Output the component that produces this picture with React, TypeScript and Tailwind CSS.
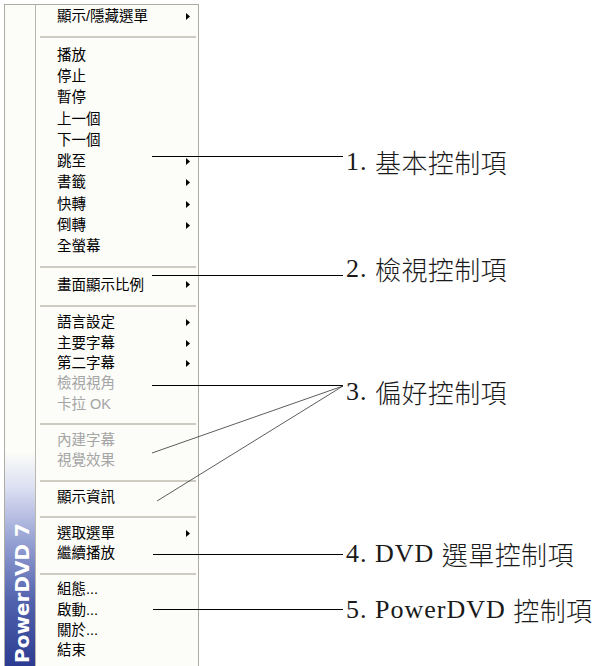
type Item = { t: string; arrow?: boolean; off?: boolean; tall?: boolean } | "sep" | "sep-sm";

const menu: Item[] = [
  { t: "顯示/隱藏選單", arrow: true, tall: true },
  "sep",
  { t: "播放", tall: true },
  { t: "停止", tall: true },
  { t: "暫停", tall: true },
  { t: "上一個", tall: true },
  { t: "下一個", tall: true },
  { t: "跳至", arrow: true, tall: true },
  { t: "書籤", arrow: true, tall: true },
  { t: "快轉", arrow: true, tall: true },
  { t: "倒轉", arrow: true, tall: true },
  { t: "全螢幕", tall: true },
  "sep",
  { t: "畫面顯示比例", arrow: true, tall: true },
  "sep",
  { t: "語言設定", arrow: true },
  { t: "主要字幕", arrow: true },
  { t: "第二字幕", arrow: true },
  { t: "檢視視角", off: true },
  { t: "卡拉 OK", off: true },
  "sep-sm",
  { t: "內建字幕", off: true },
  { t: "視覺效果", off: true },
  "sep-sm",
  { t: "顯示資訊" },
  "sep-sm",
  { t: "選取選單", arrow: true },
  { t: "繼續播放" },
  "sep-sm",
  { t: "組態..." },
  { t: "啟動..." },
  { t: "關於..." },
  { t: "結束" },
];

const labels = [
  { top: "top-[149px]", n: "1.", t: "基本控制項" },
  { top: "top-[256px]", n: "2.", t: "檢視控制項" },
  { top: "top-[379px]", n: "3.", t: "偏好控制項" },
  { top: "top-[541px]", n: "4. DVD", t: "選單控制項" },
  { top: "top-[597px]", n: "5. PowerDVD", t: "控制項" },
];

function Arrow() {
  return (
    <svg width="4" height="7" viewBox="0 0 4 7" className="shrink-0">
      <path d="M0 0L4 3.5L0 7Z" fill="#000" />
    </svg>
  );
}

function MenuRow({ item }: { item: Item }) {
  if (item === "sep" || item === "sep-sm") {
    return (
      <div className={`${item === "sep" ? "h-[17px]" : "h-[16px]"} pt-[9px] pr-[2px] pl-[4px]`}>
        <div className="h-[2px] bg-[#cdcbc2]" />
      </div>
    );
  }
  return (
    <div
      className={`flex items-center justify-between pr-[8px] pl-[21px] text-[14.5px] leading-none ${
        item.tall ? "h-[21.3px]" : "h-[20.3px]"
      } ${item.off ? "text-[#a5a5a5]" : "text-black"}`}
    >
      <span>{item.t}</span>
      {item.arrow ? <Arrow /> : null}
    </div>
  );
}

export default function App() {
  return (
    <div className="relative h-[666px] w-[601px] overflow-hidden bg-white">
      <div className="pt-[4px] pl-[4px]">
        <div className="flex w-[195px] border-x border-t border-[#aeaca3] bg-[#fcfcf9] font-['Liberation_Sans','Noto_Sans_CJK_TC',sans-serif]">
          <div className="flex w-[31px] shrink-0 flex-col justify-end border-r border-[#b9b7ae]">
            <div className="flex h-[221px] items-end justify-center bg-[linear-gradient(to_bottom,#fcfcf9_0%,#dce0f2_16%,#929dd1_42%,#5061ad_68%,#29388f_100%)] pb-[10px] pl-[3px]">
              <span className="rotate-180 font-['DejaVu_Sans',sans-serif] text-[20px] leading-none font-bold whitespace-nowrap text-white [writing-mode:vertical-rl]">
                PowerDVD 7
              </span>
            </div>
          </div>
          <div className="flex-1 pt-px pb-[12px]">
            {menu.map((item, i) => (
              <MenuRow key={i} item={item} />
            ))}
          </div>
        </div>
      </div>

      <svg className="pointer-events-none absolute inset-0" width="601" height="666">
        <g stroke="#000" strokeWidth="1" shapeRendering="crispEdges">
          <line x1="152" y1="156.5" x2="343" y2="156.5" />
          <line x1="152" y1="275.5" x2="343" y2="275.5" />
          <line x1="152" y1="385.5" x2="343" y2="385.5" />
          <line x1="153" y1="554.5" x2="343" y2="554.5" />
          <line x1="153" y1="609.5" x2="343" y2="609.5" />
        </g>
        <g stroke="#333" strokeWidth="0.8">
          <line x1="343" y1="386" x2="152" y2="453" />
          <line x1="343" y1="386" x2="157" y2="501" />
        </g>
      </svg>

      {labels.map((l) => (
        <div
          key={l.n}
          className={`absolute left-[346px] ${l.top} flex items-center text-[26px] leading-[26px] whitespace-nowrap text-[#1a1a1a]`}
        >
          <span className="font-['Liberation_Serif',serif] tracking-[1px]">{l.n}&nbsp;</span>
          <span className="font-['Noto_Sans_CJK_TC',sans-serif] font-light tracking-[0.4px]">{l.t}</span>
        </div>
      ))}
    </div>
  );
}
